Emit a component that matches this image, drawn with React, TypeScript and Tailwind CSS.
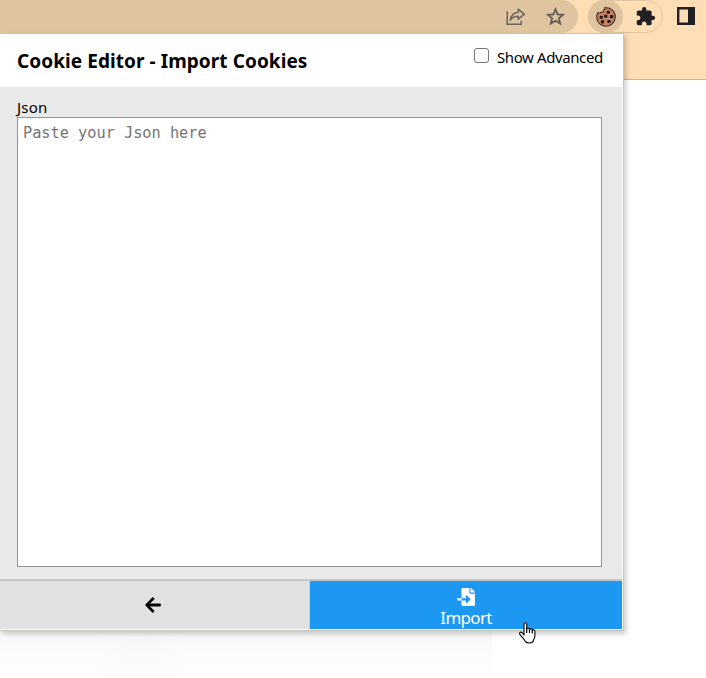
import { FaArrowLeft, FaFileImport } from "react-icons/fa";
import { MdExtension } from "react-icons/md";

function ShareIcon() {
  return (
    <svg width="20" height="18" viewBox="0 0 20 18" fill="none" stroke="#6b655d" strokeWidth="1.5">
      <path d="M1.2 3.2V16.2H15.2V12.8" />
      <path d="M12.2 1.2L18.3 6.2L12.2 11.2V8.3C8.8 8.3 6.2 9.5 4.2 12.3C4.9 8 7.6 4.7 12.2 4.2Z" strokeLinejoin="round" />
    </svg>
  );
}

function StarIcon() {
  return (
    <svg width="20" height="20" viewBox="0 0 20 20" fill="none" stroke="#5f5b56" strokeWidth="1.8">
      <path d="M9.5 2.3L11.6 7.3L17 7.8L12.9 11.3L14.2 16.6L9.5 13.8L4.8 16.6L6.1 11.3L2 7.8L7.4 7.3Z" />
    </svg>
  );
}

function CookieIcon() {
  return (
    <svg width="20" height="20" viewBox="0 0 20 20">
      <path
        d="M8.8 .8C14.8 0 19.4 4.5 19.3 10C19.2 15.5 15 19.3 10 19.3C4.8 19.3 .8 15.3 .7 10.2C.7 8.5 1.1 6.9 1.9 5.5C2.6 6.5 4.3 6.4 4.9 5.3C6.6 5.7 8 4.5 7.5 3C8.7 2.8 9.2 1.8 8.8 .8Z"
        fill="#c98262"
        stroke="#3c2b27"
        strokeWidth="1.1"
      />
      <g fill="#1c1817">
        <rect x="10.7" y="3.8" width="3.2" height="3" rx=".8" />
        <rect x="8.2" y="7.8" width="3.2" height="3" rx=".8" />
        <rect x="14" y="8" width="3.3" height="3.2" rx=".8" />
        <rect x="3.7" y="8.8" width="3.1" height="3" rx=".8" />
        <rect x="4.9" y="13.2" width="3.3" height="3.2" rx=".8" />
        <rect x="11.3" y="12.9" width="3.3" height="3.2" rx=".8" />
      </g>
    </svg>
  );
}

function PanelIcon() {
  return (
    <svg width="18" height="18" viewBox="0 0 18 18">
      <path fill="#202124" fillRule="evenodd" d="M0 0H18V18H0ZM2.4 2.4V15.6H11V2.4Z" />
    </svg>
  );
}

function HandCursor() {
  return (
    <svg className="absolute left-[518px] top-[622px]" width="18" height="22" viewBox="0 0 18 22">
      <path
        d="M6 13.5V2.2C6 .3 8.7 .3 8.7 2.2V7C9.1 5.8 11.4 6 11.5 7.3C12.2 6.4 14.2 6.7 14.3 8C15.1 7.2 16.9 7.7 16.9 9.2V14C16.9 16 15.9 17.3 15.2 18.4V19.5C13 21.6 9.1 21.6 7.3 19.4C6.2 17.3 4.5 15.7 3.3 14.1L1.7 12C1.1 10.2 2.8 9.5 4 10.7L6 12.8"
        fill="#fff"
        stroke="#000"
        strokeWidth="1.1"
      />
      <path d="M8.7 6.5V11M11.5 7V11M14.3 8V11.5" stroke="#000" strokeWidth="1.2" />
    </svg>
  );
}

function BrowserToolbar() {
  return (
    <header className="h-20 border-b border-[#d1b694] bg-[#ffddb5]">
      <div className="flex h-[33px]">
        <div className="flex w-[578px] items-center justify-end gap-5 rounded-r-full bg-[#dfc4a0] pr-3">
          <ShareIcon />
          <StarIcon />
        </div>
        <div className="ml-[10px] flex w-[75px] items-center rounded-full border border-[#dfc4a0]">
          <div className="-ml-px flex h-[33px] w-[35px] items-center justify-center rounded-full bg-[#dfc4a0]">
            <CookieIcon />
          </div>
          <MdExtension size={21} className="ml-3 text-[#202124]" />
        </div>
        <div className="ml-[13.5px] mt-[7px]">
          <PanelIcon />
        </div>
      </div>
    </header>
  );
}

function CookiePopup() {
  return (
    <main className="absolute left-0 top-[33px] flex h-[598px] w-[624px] flex-col border-y border-r border-[#c8c5c1] bg-white pb-px pr-px shadow-[2px_3px_5px_rgba(0,0,0,0.2)]">
      <div className="flex h-[53px] items-start justify-between pl-[17px] pr-[19px]">
        <h1 className="whitespace-nowrap pt-[13px] text-[19px] font-bold leading-7 tracking-[0.07px]">Cookie Editor - Import Cookies</h1>
        <label className="flex items-start whitespace-nowrap text-[15px] leading-6">
          <span className="mr-2 mt-[14px] size-[15px] rounded-[3px] border border-[#767676] bg-white" />
          <span className="mt-[11px] w-[106px] tracking-[-0.4px]">Show Advanced</span>
        </label>
      </div>
      <section className="flex h-[492px] flex-col bg-[#e9e9e9] pb-3 pl-[17px] pr-5 pt-[10px]">
        <label htmlFor="json" className="h-5 text-[15px] leading-5 tracking-[0.2px]">Json</label>
        <textarea
          id="json"
          placeholder="Paste your Json here"
          className="min-h-0 flex-1 resize-none border border-[#949494] bg-white px-[5px] py-[3px] font-['DejaVu_Sans_Mono',monospace] text-[15.25px] leading-6 placeholder:text-[#757575]"
        />
      </section>
      <footer className="flex min-h-0 flex-1 border-t-2 border-[#c4c7c9]">
        <button aria-label="Back" className="flex w-[310px] items-center justify-center border-r border-[#c9cfd3] bg-[#e1e1e1] pb-px pr-1">
          <FaArrowLeft size={18} />
        </button>
        <button className="flex flex-1 flex-col items-center bg-[#1c98f3] pt-[7px] text-[17px] leading-[22px] text-white">
          <FaFileImport size={18} className="shrink-0" />
          <span className="mt-px tracking-[-0.7px]">Import</span>
        </button>
      </footer>
    </main>
  );
}

export default function App() {
  return (
    <div className="relative h-[678px] w-[706px] overflow-hidden bg-white font-['Noto_Sans',sans-serif] text-black">
      <BrowserToolbar />
      <div className="mt-[551px] flex h-[47px] w-[492px] bg-linear-to-b from-[#f8f8f8] to-[#fefefe]">
        <div className="ml-[90px] w-[100px] bg-linear-to-r from-transparent via-black/1 to-transparent" />
      </div>
      <CookiePopup />
      <HandCursor />
    </div>
  );
}
